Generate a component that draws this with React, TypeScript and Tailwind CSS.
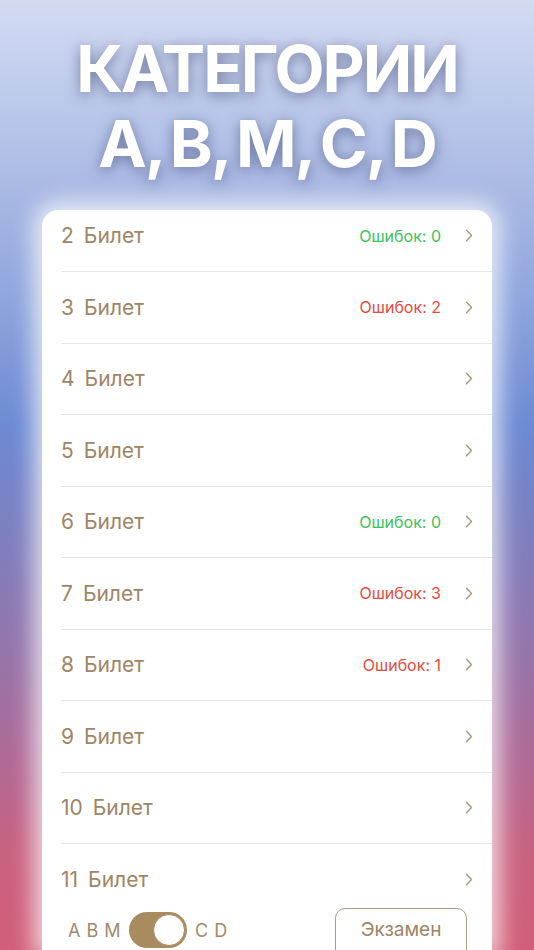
import React from "react";

type Row = { n: number; err?: number };

const rows: Row[] = [
  { n: 2, err: 0 },
  { n: 3, err: 2 },
  { n: 4 },
  { n: 5 },
  { n: 6, err: 0 },
  { n: 7, err: 3 },
  { n: 8, err: 1 },
  { n: 9 },
  { n: 10 },
  { n: 11 },
];

function Chevron() {
  return (
    <svg width="8" height="13" viewBox="0 0 8 13" fill="none" className="shrink-0">
      <path d="M1.5 1.2 L6.5 6.5 L1.5 11.8" stroke="#a89680" strokeWidth="1.4" strokeLinecap="round" strokeLinejoin="round" />
    </svg>
  );
}

export default function App() {
  return (
    <div
      className="relative h-[950px] w-full overflow-hidden flex flex-col bg-[linear-gradient(180deg,#d3dbf2_0%,#a9b9e4_20%,#8ea4dc_32%,#6c8ad3_45%,#7e7fbf_56%,#9476ac_68%,#b16a96_80%,#c96280_90%,#d25e78_100%)]"
      style={{ fontFamily: "Inter, 'Noto Sans', sans-serif" }}
    >
      <div className="flex flex-col items-center pt-[31px] h-[210px]">
        <div className="text-white font-bold text-[65px] leading-[75px] tracking-[-2px] text-center [text-shadow:0_3px_14px_rgba(45,55,100,0.55)]">
          <div>КАТЕГОРИИ</div>
          <div className="[word-spacing:-6px]">A, B, M, C, D</div>
        </div>
      </div>

      <div className="mx-[42px] flex-1 flex flex-col bg-white rounded-t-[16px] overflow-hidden shadow-[0_0_22px_8px_rgba(255,255,255,0.75)]">
        <div className="flex-1 overflow-hidden">
          <div className="-mt-[9.5px]">
            {rows.map((r) => (
              <div key={r.n} className="h-[71.5px] pl-[19px] flex">
                <div className="flex-1 flex items-center border-b border-[#e6e6e8] pr-[19px]">
                  <div className="flex items-center gap-[10px] text-[21px] text-[#9e8566]">
                    <span>{r.n}</span>
                    <span>Билет</span>
                  </div>
                  <div className="flex-1" />
                  {r.err !== undefined && (
                    <span
                      className={
                        "text-[16px] mr-[24px] " +
                        (r.err === 0 ? "text-[#3dc15b]" : "text-[#e84a40]")
                      }
                    >
                      Ошибок: {r.err}
                    </span>
                  )}
                  <Chevron />
                </div>
              </div>
            ))}
          </div>
        </div>
        <div className="h-[42px] shrink-0 flex items-start pl-[26px] pr-[25px] relative">
          <div className="flex items-center mt-[4px] h-[36px]">
            <span className="text-[18px] text-[#a08a6c] tracking-[0.5px]">A B M</span>
            <div className="ml-[8px] w-[58px] h-[36px] rounded-full bg-[#a88b5f] relative">
              <div className="absolute right-[2px] top-[2px] w-[32px] h-[32px] rounded-full bg-white border border-[#a88b5f]" />
            </div>
            <span className="ml-[8px] text-[18px] text-[#a08a6c] tracking-[0.5px]">C D</span>
          </div>
          <div className="flex-1" />
          <div className="w-[132px] h-[52px] shrink-0 border-[1.5px] border-[#b09a80] rounded-[10px] flex items-center justify-center text-[19px] text-[#9e8566] pb-[8px]">
            Экзамен
          </div>
        </div>
      </div>
    </div>
  );
}
